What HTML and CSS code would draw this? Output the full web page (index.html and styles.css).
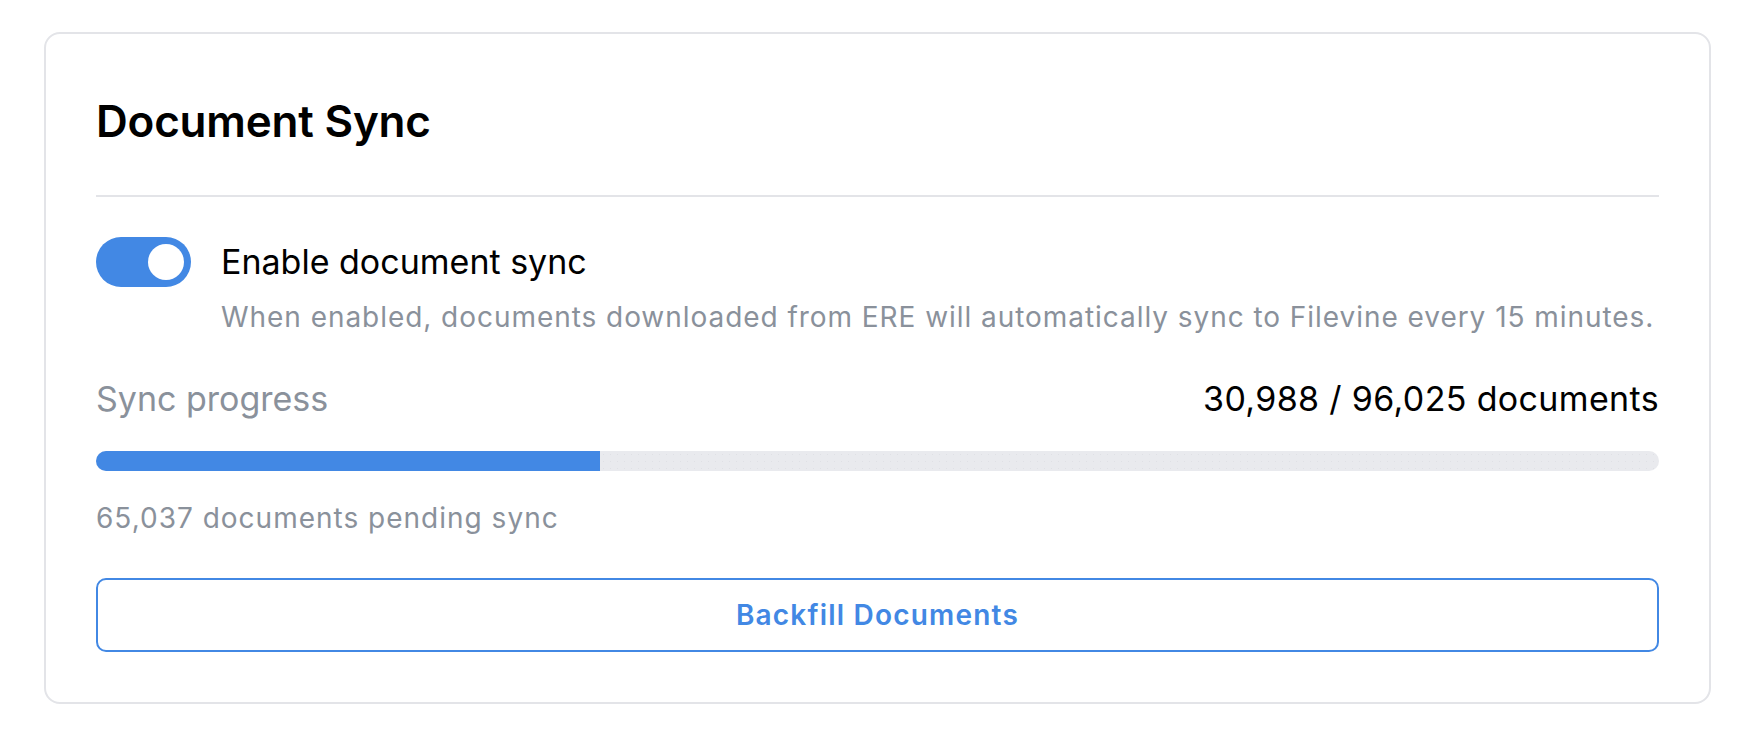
FILE: index.html
```html
<!DOCTYPE html>
<html lang="en">
<head>
<meta charset="utf-8">
<title>Document Sync</title>
<link rel="stylesheet" href="styles.css">
</head>
<body>
  <section class="card">
    <header class="card-header">
      <h2 class="card-title">Document Sync</h2>
    </header>
    <div class="setting">
      <div class="toggle is-on" role="switch" aria-checked="true"><span class="knob"></span></div>
      <div class="setting-text">
        <div class="setting-label">Enable document sync</div>
        <div class="setting-desc">When enabled, documents downloaded from ERE will automatically sync to Filevine every 15 minutes.</div>
      </div>
    </div>
    <div class="progress-head">
      <span class="progress-label">Sync progress</span>
      <span class="progress-count">30,988 / 96,025 documents</span>
    </div>
    <div class="track"><div class="fill" style="width: 32.27%"></div></div>
    <div class="pending">65,037 documents pending sync</div>
    <button class="btn-outline" type="button">Backfill Documents</button>
  </section>
</body>
</html>
```
FILE: styles.css
```css
html, body {
  margin: 0;
  padding: 0;
  background: #ffffff;
}
body {
  font-family: Inter, "Noto Sans", "Liberation Sans", sans-serif;
  color: #000000;
}
.card {
  box-sizing: border-box;
  width: 1667px;
  margin: 32px 0 0 44px;
  border: 2px solid #e3e4e8;
  border-radius: 16px;
  padding: 0 50px 50px;
  background: #ffffff;
}
.card-header {
  padding: 61px 0 48px;
  border-bottom: 2px solid #e3e4e8;
}
.card-title {
  margin: 0;
  font-size: 44px;
  line-height: 52px;
  font-weight: 600;
  letter-spacing: -0.2px;
  color: #000000;
}
.setting {
  display: flex;
  align-items: flex-start;
  gap: 30px;
  margin-top: 40px;
}
.toggle {
  box-sizing: border-box;
  flex: 0 0 auto;
  width: 95px;
  height: 50px;
  border-radius: 25px;
  background: #4288e4;
  display: flex;
  align-items: center;
  justify-content: flex-end;
  padding: 0 7px;
}
.knob {
  width: 36px;
  height: 36px;
  border-radius: 50%;
  background: #ffffff;
}
.setting-text {
  padding-top: 5px;
}
.setting-label {
  font-size: 34px;
  line-height: 40px;
  color: #000000;
}
.setting-desc {
  margin-top: 17px;
  font-size: 28px;
  line-height: 36px;
  letter-spacing: 0.95px;
  color: #8a919b;
}
.progress-head {
  display: flex;
  justify-content: space-between;
  align-items: baseline;
  margin-top: 44px;
  font-size: 34px;
  line-height: 40px;
}
.progress-label {
  color: #8a919b;
}
.progress-count {
  color: #000000;
  font-weight: 400;
  letter-spacing: 0.35px;
}
.track {
  margin-top: 32px;
  height: 20px;
  border-radius: 10px;
  overflow: hidden;
  background-color: #e9eaee;
  background-image: radial-gradient(circle, #dfe0e5 0.7px, transparent 1px);
  background-size: 7px 7px;
}
.fill {
  height: 100%;
  background: #4288e4;
}
.pending {
  margin-top: 29px;
  font-size: 28px;
  line-height: 36px;
  letter-spacing: 1px;
  color: #8a919b;
}
.btn-outline {
  box-sizing: border-box;
  display: block;
  width: 100%;
  height: 74px;
  margin-top: 42px;
  border: 2px solid #4288e4;
  border-radius: 10px;
  background: #ffffff;
  color: #4288e4;
  font-family: Inter, "Noto Sans", "Liberation Sans", sans-serif;
  font-size: 28px;
  font-weight: 600;
  line-height: 36px;
  letter-spacing: 1.2px;
  padding: 0;
  cursor: pointer;
}
```
